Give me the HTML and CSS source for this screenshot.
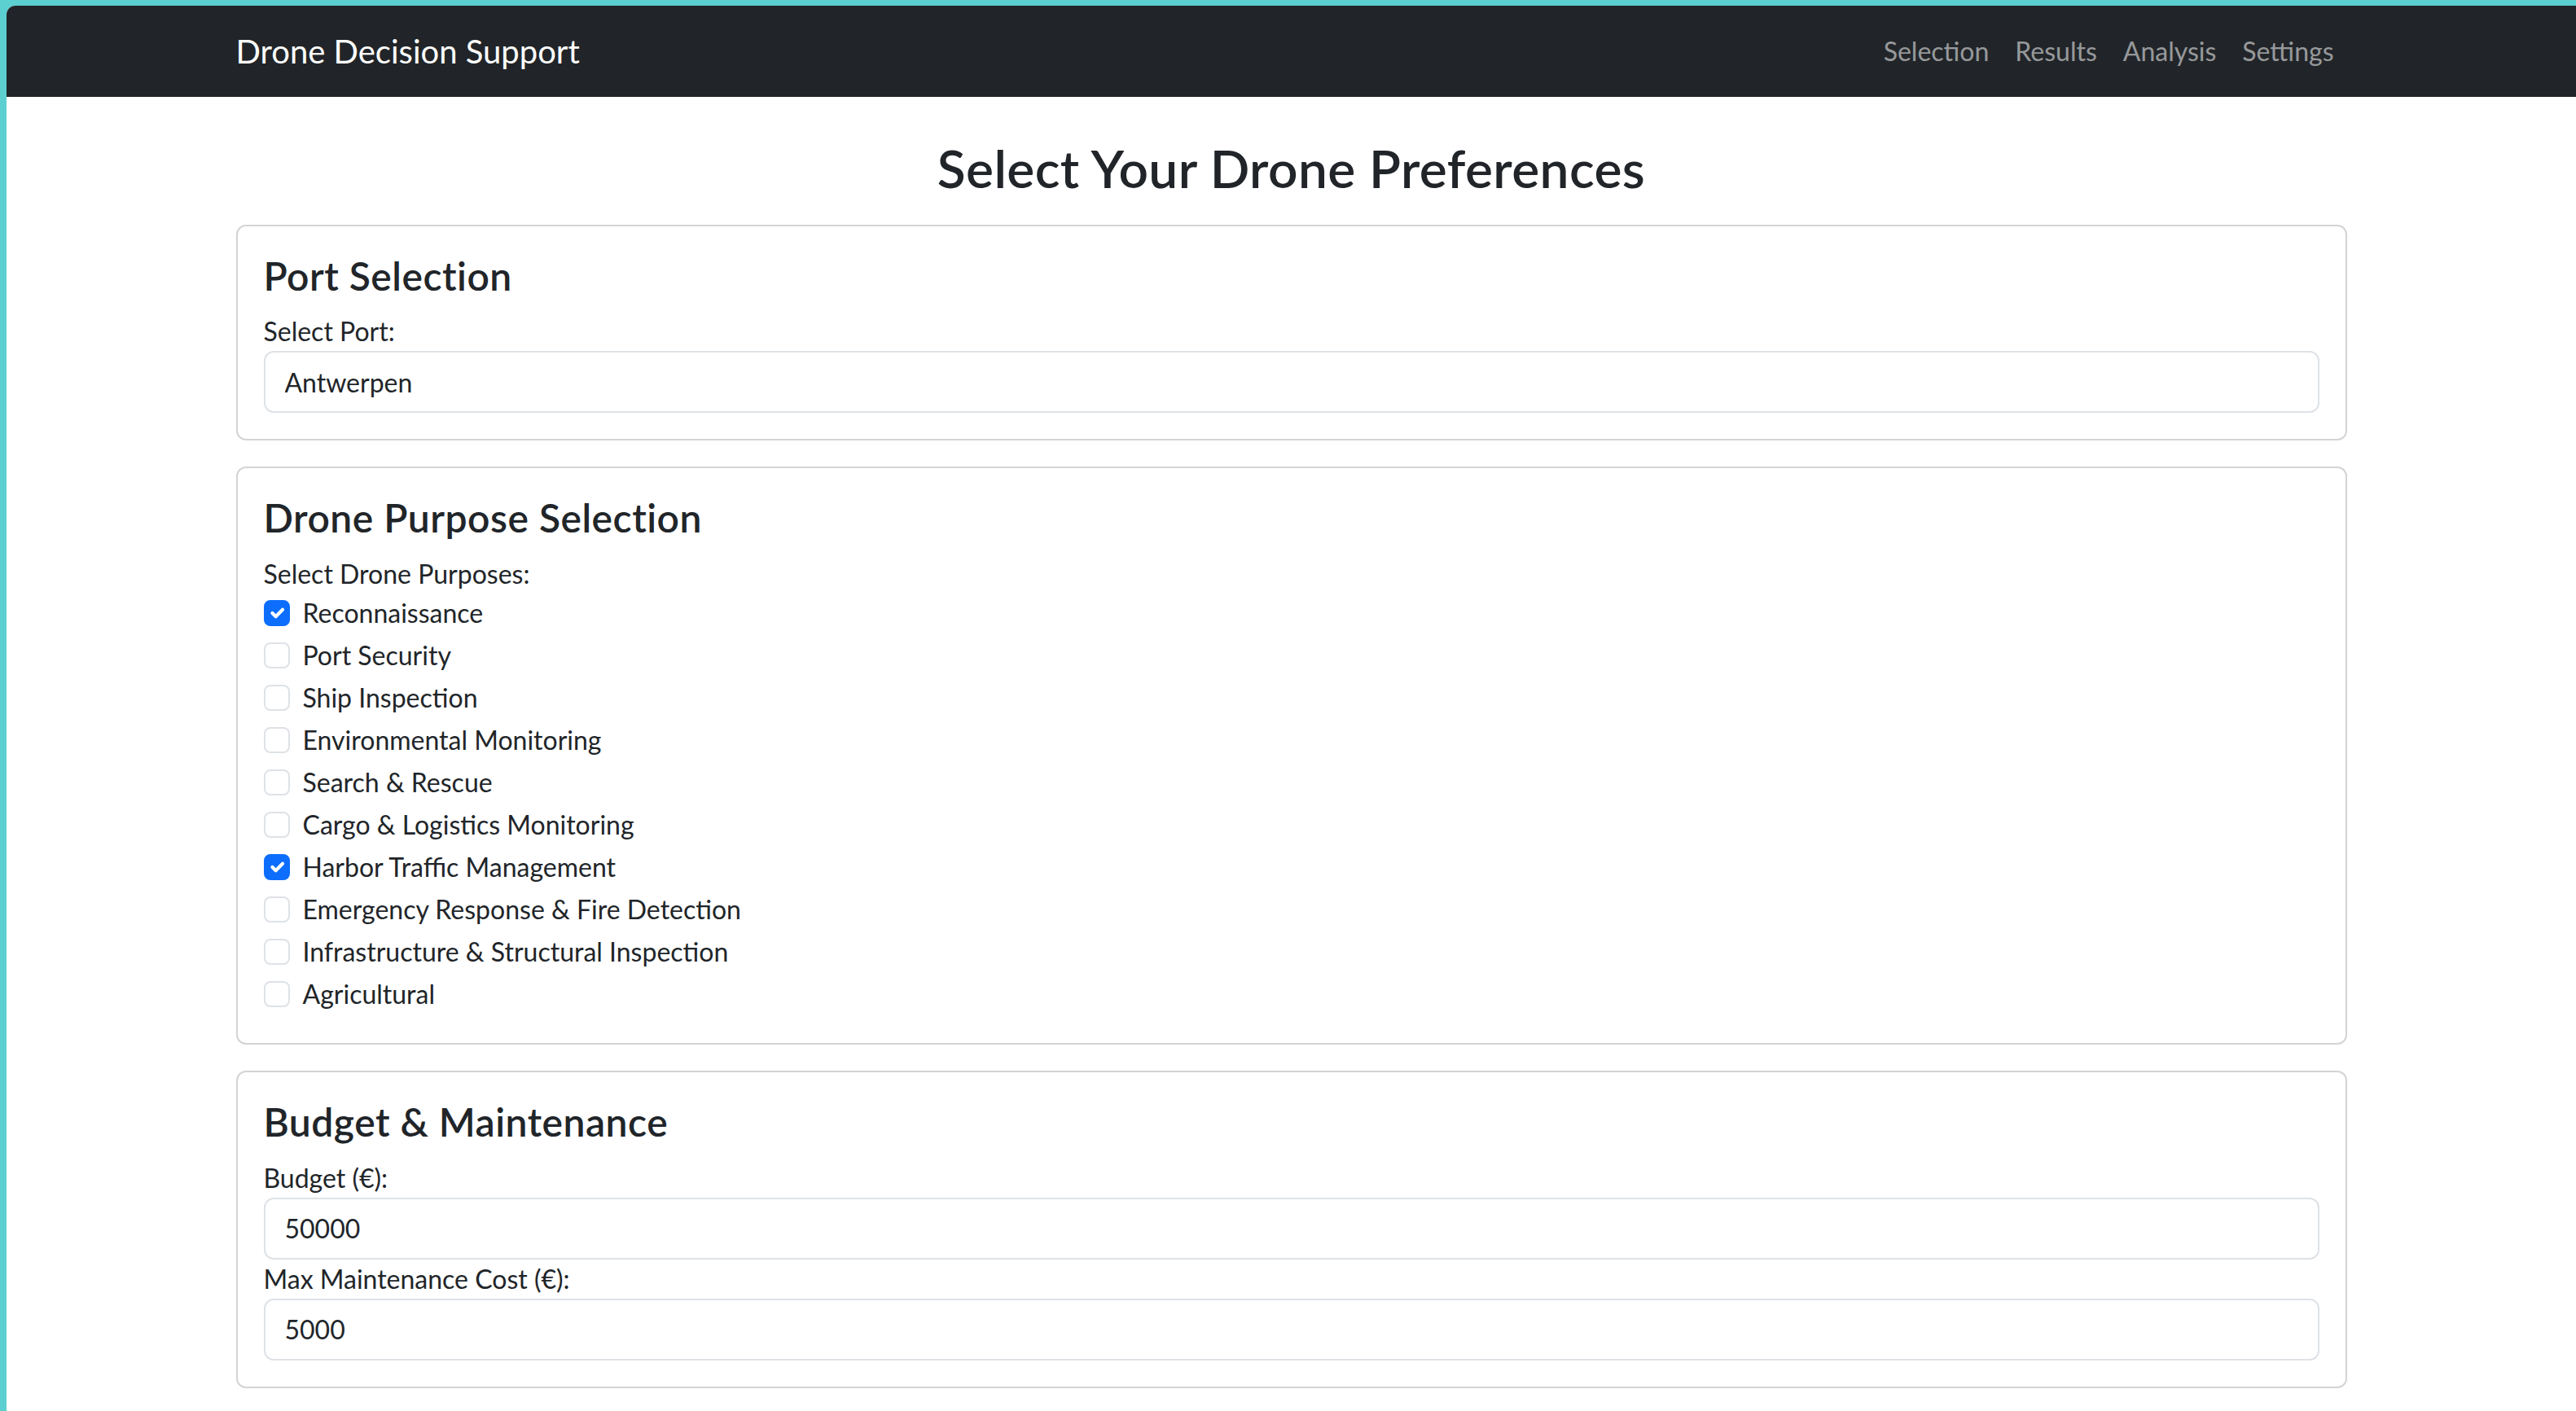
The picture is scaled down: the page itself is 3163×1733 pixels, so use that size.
FILE: index.html
```html
<!DOCTYPE html>
<html lang="en">
<head>
<meta charset="utf-8">
<title>Drone Decision Support</title>
<link rel="stylesheet" href="styles.css">
</head>
<body>
<div class="window">
  <nav class="navbar">
    <div class="container nav-inner">
      <a class="brand" href="#">Drone Decision Support</a>
      <ul class="nav-links">
        <li><a href="#">Selection</a></li>
        <li><a href="#">Results</a></li>
        <li><a href="#">Analysis</a></li>
        <li><a href="#">Settings</a></li>
      </ul>
    </div>
  </nav>

  <main class="container">
    <h2 class="page-title">Select Your Drone Preferences</h2>

    <section class="card">
      <h4 class="card-title">Port Selection</h4>
      <label class="field-label" for="port">Select Port:</label>
      <input class="form-control" id="port" type="text" value="Antwerpen">
    </section>

    <section class="card">
      <h4 class="card-title">Drone Purpose Selection</h4>
      <label class="field-label">Select Drone Purposes:</label>
      <div class="check"><span class="box checked"></span><span class="check-label">Reconnaissance</span></div>
      <div class="check"><span class="box"></span><span class="check-label">Port Security</span></div>
      <div class="check"><span class="box"></span><span class="check-label">Ship Inspection</span></div>
      <div class="check"><span class="box"></span><span class="check-label">Environmental Monitoring</span></div>
      <div class="check"><span class="box"></span><span class="check-label">Search &amp; Rescue</span></div>
      <div class="check"><span class="box"></span><span class="check-label">Cargo &amp; Logistics Monitoring</span></div>
      <div class="check"><span class="box checked"></span><span class="check-label">Harbor Traffic Management</span></div>
      <div class="check"><span class="box"></span><span class="check-label">Emergency Response &amp; Fire Detection</span></div>
      <div class="check"><span class="box"></span><span class="check-label">Infrastructure &amp; Structural Inspection</span></div>
      <div class="check"><span class="box"></span><span class="check-label">Agricultural</span></div>
    </section>

    <section class="card">
      <h4 class="card-title">Budget &amp; Maintenance</h4>
      <label class="field-label" for="budget">Budget (€):</label>
      <input class="form-control" id="budget" type="text" value="50000">
      <label class="field-label" for="maint">Max Maintenance Cost (€):</label>
      <input class="form-control" id="maint" type="text" value="5000">
    </section>
  </main>
</div>
</body>
</html>
```

FILE: styles.css
```css
html, body {
  margin: 0;
  padding: 0;
}

body {
  background: #5ccfd1;
  font-family: "Lato", "Open Sans", sans-serif;
  color: #212529;
}

.window {
  margin: 7px 0 0 8px;
  background: #ffffff;
  border-top-left-radius: 11px;
  overflow: hidden;
  min-height: calc(100vh - 7px);
}

.container {
  max-width: 2640px;
  margin: 0 auto;
  padding: 0 24px;
  box-sizing: border-box;
}

.navbar {
  background: #212529;
  padding: 16px 0;
}

.nav-inner {
  display: flex;
  align-items: center;
  justify-content: space-between;
}

.brand {
  color: #ffffff;
  text-decoration: none;
  font-size: 40px;
  line-height: 60px;
  padding: 10px 0;
}

.nav-links {
  display: flex;
  list-style: none;
  margin: 0;
  padding: 0;
}

.nav-links a {
  display: block;
  padding: 16px 16px;
  font-size: 32px;
  line-height: 48px;
  color: rgba(255, 255, 255, 0.55);
  text-decoration: none;
}

.page-title {
  margin: 50px 0 30px;
  font-size: 64px;
  line-height: 1.2;
  font-weight: 600;
  letter-spacing: 0.4px;
  text-align: center;
}

.card {
  border: 2px solid #d4d4d5;
  border-radius: 12px;
  padding: 32px;
  margin-bottom: 32px;
}

.card-title {
  margin: 0 0 16px;
  font-size: 48px;
  line-height: 1.2;
  font-weight: 600;
  letter-spacing: 0.5px;
}

.field-label {
  display: block;
  font-size: 32px;
  line-height: 48px;
}

.form-control {
  display: block;
  width: 100%;
  box-sizing: border-box;
  height: 76px;
  padding: 12px 24px;
  font-family: inherit;
  font-size: 32px;
  line-height: 48px;
  color: #212529;
  background: #ffffff;
  border: 2px solid #dee2e6;
  border-radius: 12px;
  outline: none;
}

.check {
  display: flex;
  align-items: flex-start;
  min-height: 48px;
  margin-bottom: 4px;
  font-size: 32px;
  line-height: 48px;
}

.box {
  flex: none;
  width: 32px;
  height: 32px;
  box-sizing: border-box;
  margin-top: 8px;
  margin-right: 16px;
  border: 2px solid #dee2e6;
  border-radius: 8px;
  background: #ffffff;
}

.box.checked {
  background-color: #0d6efd;
  border-color: #0d6efd;
  background-image: url("data:image/svg+xml,%3csvg xmlns='http://www.w3.org/2000/svg' viewBox='0 0 20 20'%3e%3cpath fill='none' stroke='%23fff' stroke-linecap='round' stroke-linejoin='round' stroke-width='3' d='m6 10 3 3 6-6'/%3e%3c/svg%3e");
  background-size: 100% 100%;
}
```
